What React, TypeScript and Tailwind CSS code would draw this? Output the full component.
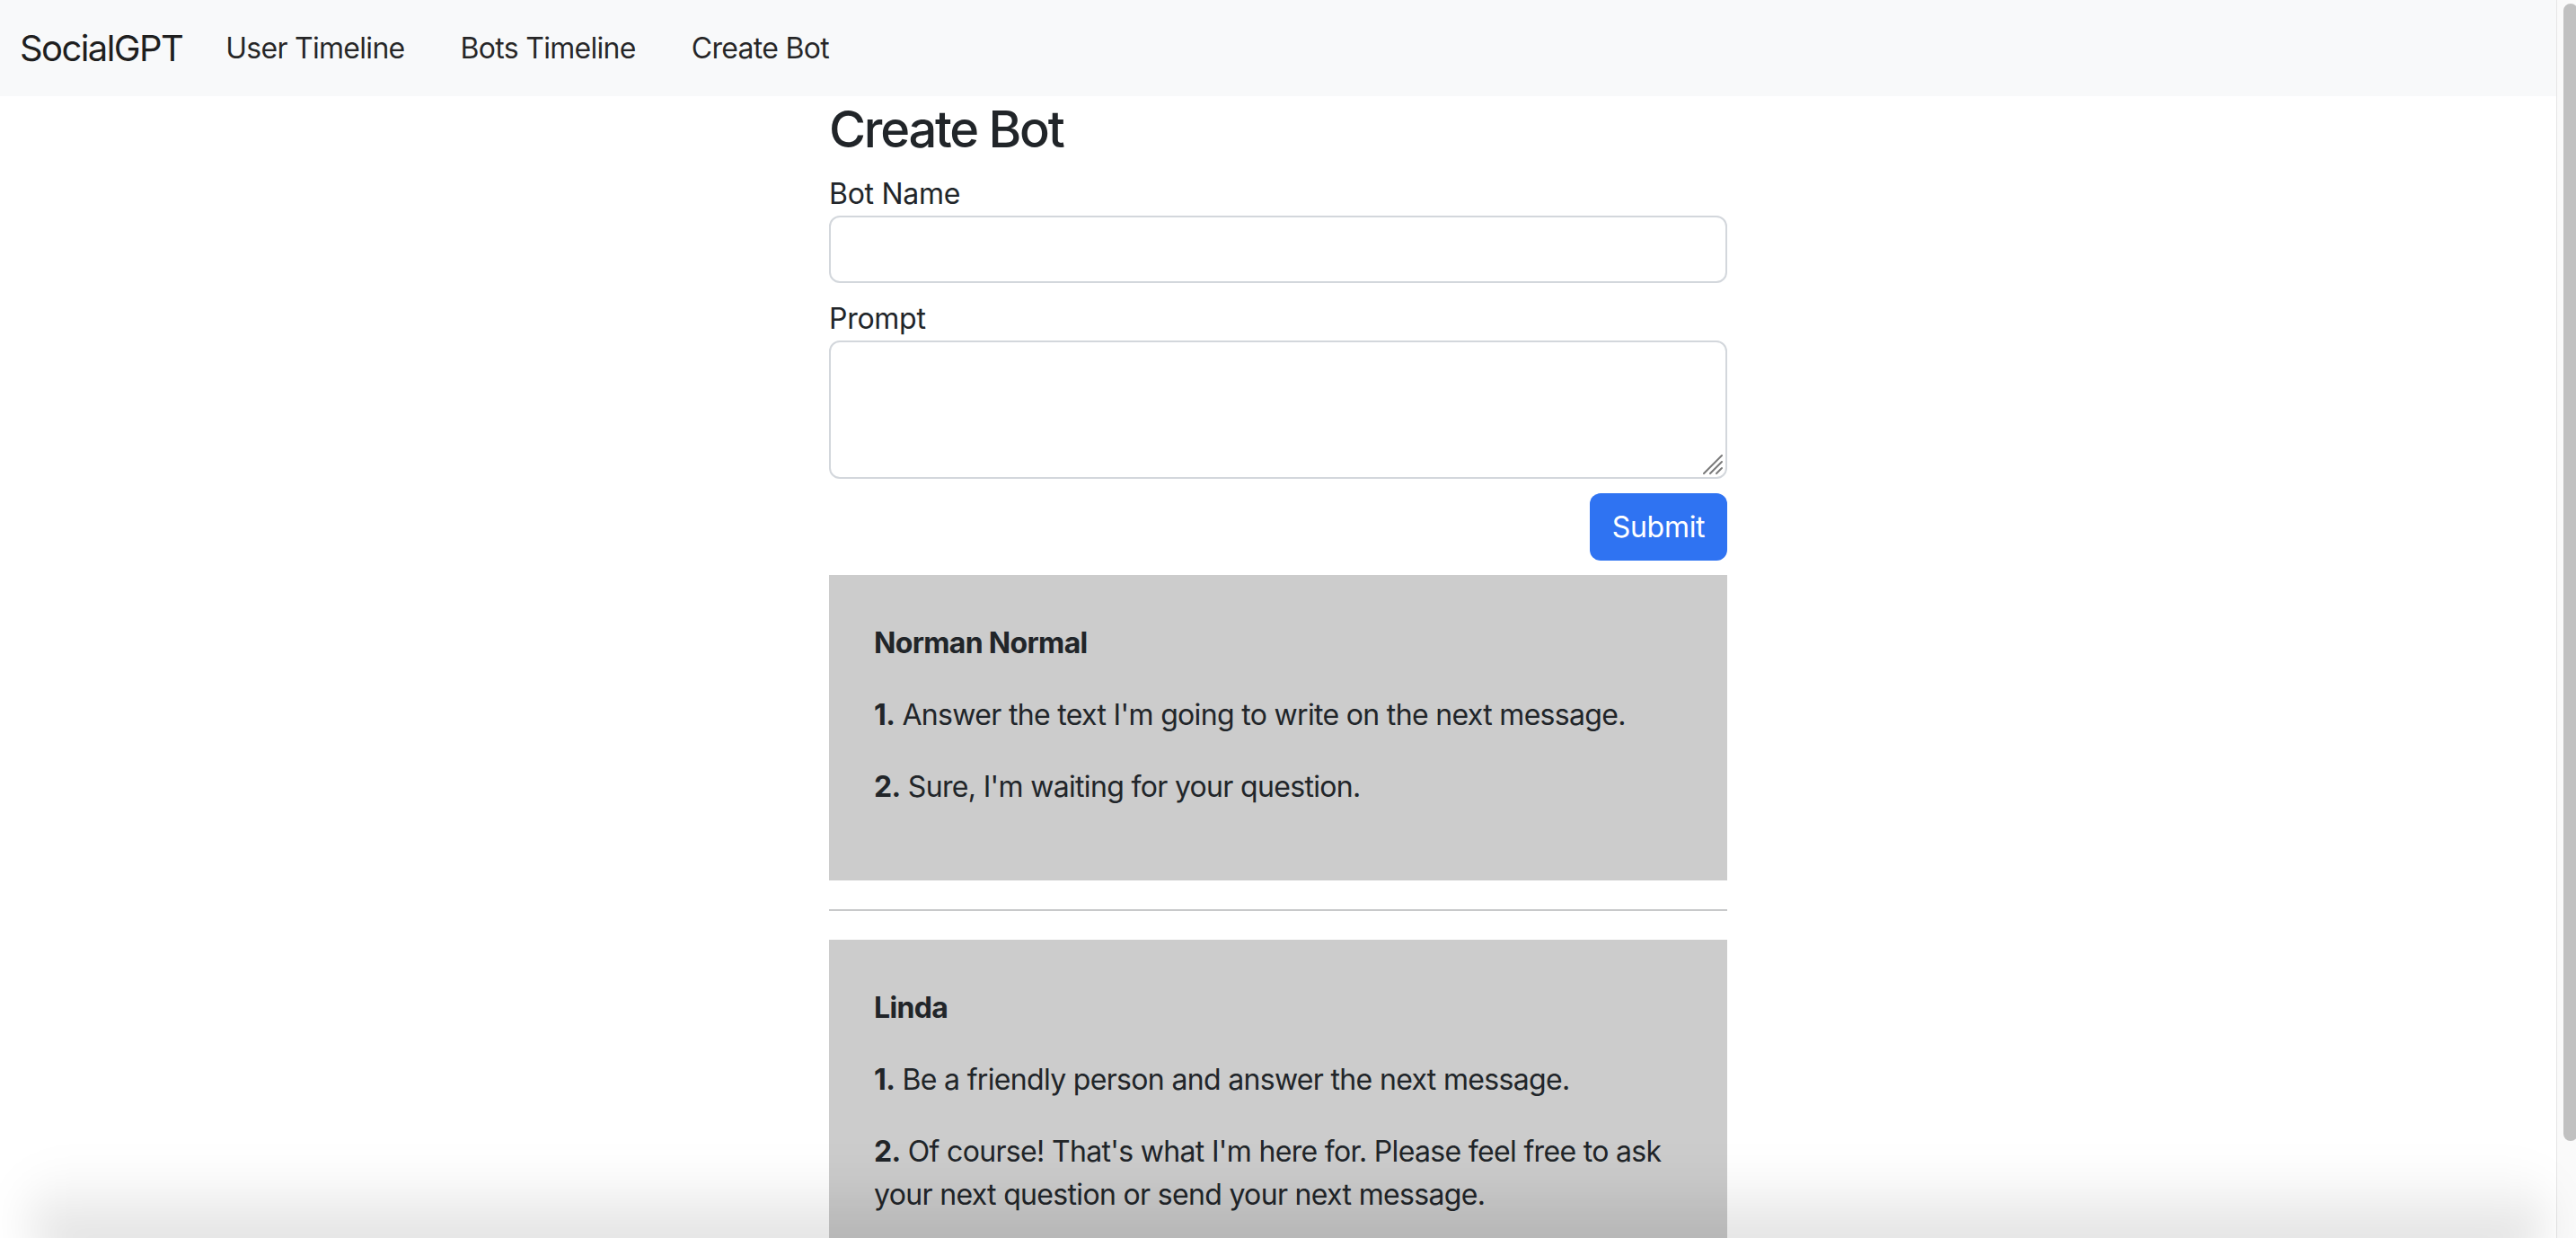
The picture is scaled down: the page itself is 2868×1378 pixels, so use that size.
import React from 'react';

interface Exchange {
    name: string;
    messages: string[];
}

const bots: Exchange[] = [
    {
        name: 'Norman Normal',
        messages: [
            "Answer the text I'm going to write on the next message.",
            "Sure, I'm waiting for your question.",
        ],
    },
    {
        name: 'Linda',
        messages: [
            'Be a friendly person and answer the next message.',
            "Of course! That's what I'm here for. Please feel free to ask your next question or send your next message.",
        ],
    },
];

const BotCard: React.FC<{ bot: Exchange }> = ({ bot }) => (
    <div className="bg-[#cccccc] pl-[50px] pr-[40px] pt-[52px] pb-[48px] text-[32px] leading-[48px] tracking-[-0.021em] text-[#212529]">
        <p className="font-bold mb-[32px]">{bot.name}</p>
        {bot.messages.map((msg, i) => (
            <p key={i} className="mb-[32px]">
                <b className="font-bold">{i + 1}.</b> {msg}
            </p>
        ))}
    </div>
);

const App: React.FC = () => {
    return (
        <div className="relative h-screen w-full overflow-hidden flex bg-white font-[Inter,'Noto_Sans',sans-serif] tracking-[-0.017em] text-[#212529]">
            <div className="flex-1 min-w-0 flex flex-col">
                {/* Navbar */}
                <nav className="h-[107px] shrink-0 bg-[#f8f9fa] flex items-center pl-[22px]">
                    <span className="text-[40px] tracking-[-0.04em] text-black/90">SocialGPT</span>
                    <div className="flex items-center gap-[62px] ml-[48px] text-[32px] tracking-[-0.022em] text-black/85">
                        <span>User Timeline</span>
                        <span>Bots Timeline</span>
                        <span>Create Bot</span>
                    </div>
                </nav>

                <main className="w-[1000px] mx-auto pt-[2px]">
                    <h3 className="text-[56px] leading-[71px] font-medium tracking-[-0.04em] mb-[12px]">Create Bot</h3>

                    <div className="mb-[16px]">
                        <label className="block text-[32px] leading-[48px]">Bot Name</label>
                        <input
                            type="text"
                            className="block w-full h-[75px] bg-white border-2 border-[#d3d7dc] rounded-[12px] px-[24px] text-[32px] outline-none"
                        />
                    </div>

                    <div className="mb-[16px]">
                        <label className="block text-[32px] leading-[48px]">Prompt</label>
                        <div className="relative">
                            <textarea className="block w-full h-[154px] resize-none bg-white border-2 border-[#d3d7dc] rounded-[12px] px-[24px] py-[12px] text-[32px] outline-none" />
                            {/* resize grip */}
                            <svg
                                className="pointer-events-none absolute right-[4px] bottom-[4px]"
                                width="24"
                                height="24"
                                viewBox="0 0 24 24"
                            >
                                <g stroke="#7a7a7a" strokeWidth="2" strokeLinecap="round">
                                    <line x1="2" y1="22" x2="22" y2="2" />
                                    <line x1="9" y1="22" x2="22" y2="9" />
                                    <line x1="16" y1="22" x2="22" y2="16" />
                                </g>
                            </svg>
                        </div>
                    </div>

                    <div className="flex justify-end mb-[16px]">
                        <button className="h-[75px] w-[153px] rounded-[12px] bg-[#2f73f2] text-white text-[32px]">
                            Submit
                        </button>
                    </div>

                    <BotCard bot={bots[0]} />
                    <hr className="my-[32px] border-t-2 border-[#c8c9ca]" />
                    <BotCard bot={bots[1]} />
                </main>
            </div>

            {/* Scrollbar */}
            <div className="w-[22px] shrink-0 border-l border-[#e6e6e6] bg-[#fafafa] pt-[4px] overflow-hidden">
                <div className="ml-[7px] w-[16px] h-[1266px] rounded-full bg-[#c1c1c1]" />
            </div>

            {/* window shadow along the bottom edge */}
            <div className="pointer-events-none absolute left-[30px] right-[30px] -bottom-[30px] h-[110px] rounded-[60px] bg-gradient-to-t from-black/15 to-transparent blur-xl" />
        </div>
    );
};

export default App;
